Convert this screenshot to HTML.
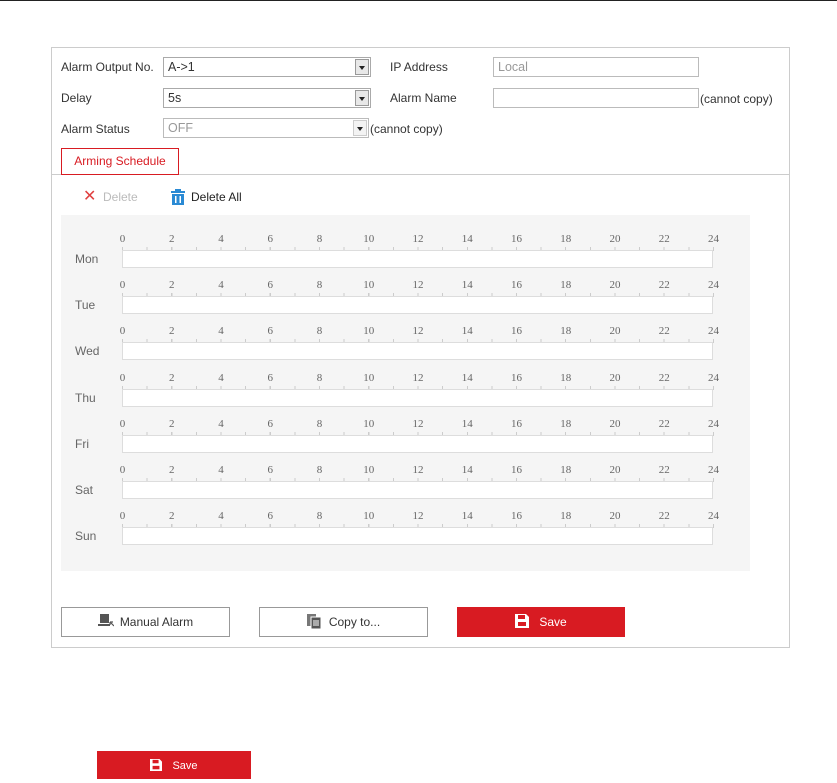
<!DOCTYPE html>
<html><head><style>
body{margin:0;width:837px;height:783px;background:#fff;font-family:"Liberation Sans",sans-serif;font-size:12px;color:#333;position:relative;overflow:hidden}
.a{position:absolute}
.lbl{position:absolute;font-size:12px;color:#333}
.sel{position:absolute;border:1px solid #aaa;background:#fff;height:18px;box-sizing:border-box;height:20px}
.sel span{position:absolute;left:4px;top:2px;font-size:12.5px}
.arr{position:absolute;right:1px;top:1px;width:14px;height:16px;background:#e8e8e8;border:1px solid #999;box-sizing:border-box}
.arr:after{content:"";position:absolute;left:3px;top:6px;border-left:3.5px solid transparent;border-right:3.5px solid transparent;border-top:4px solid #222}
.num{position:absolute;font-family:"Liberation Serif",serif;font-size:11px;color:#666;transform:translateX(-50%)}
.ticks{position:absolute;left:122px;width:592px;height:4px;background:repeating-linear-gradient(to right,#ccc 0 1px,transparent 1px 24.625px)}
.bar{position:absolute;left:122px;width:591px;height:18px;background:#fff;border:1px solid #ddd;box-sizing:border-box}
.day{position:absolute;left:75px;color:#666;font-size:12px}
.btn{position:absolute;top:607px;height:30px;box-sizing:border-box;border:1px solid #999;background:#fff;text-align:center;line-height:28px;font-size:12px;color:#333}
.red{background:#d81b22;border-color:#d81b22;color:#fff}
</style></head><body>
<div class="a" style="left:0;top:0;width:837px;height:1px;background:#222"></div>
<div class="a" style="left:51px;top:47px;width:739px;height:601px;border:1px solid #ccc;box-sizing:border-box"></div>

<div class="lbl" style="left:61px;top:60px">Alarm Output No.</div>
<div class="sel" style="left:163px;top:57px;width:208px"><span>A-&gt;1</span><div class="arr"></div></div>
<div class="lbl" style="left:390px;top:60px">IP Address</div>
<div class="sel" style="left:493px;top:57px;width:206px;border-color:#bbb"><span style="color:#999">Local</span></div>

<div class="lbl" style="left:61px;top:91px">Delay</div>
<div class="sel" style="left:163px;top:88px;width:208px"><span>5s</span><div class="arr"></div></div>
<div class="lbl" style="left:390px;top:91px">Alarm Name</div>
<div class="sel" style="left:493px;top:88px;width:206px;border-color:#bbb"></div>
<div class="lbl" style="left:700px;top:92px">(cannot copy)</div>

<div class="lbl" style="left:61px;top:122px">Alarm Status</div>
<div class="sel" style="left:163px;top:118px;width:206px;border-color:#bbb"><span style="color:#999">OFF</span><div class="arr" style="background:#f3f3f3;border-color:#ccc"></div></div>
<div class="lbl" style="left:370px;top:122px">(cannot copy)</div>

<div class="a" style="left:51px;top:174px;width:739px;height:1px;background:#ccc"></div>
<div class="a" style="left:61px;top:148px;width:118px;height:27px;border:1px solid #d81b22;box-sizing:border-box;background:#fff;color:#d81b22;font-size:12px;text-align:center;line-height:25px">Arming Schedule</div>

<div class="a" style="left:83px;top:189px;color:#e04040;font-size:16px;line-height:16px">✕</div>
<div class="lbl" style="left:103px;top:190px;color:#bbb">Delete</div>
<svg class="a" style="left:170px;top:189px" width="16" height="16" viewBox="0 0 16 16"><rect x="1" y="2" width="14" height="2" fill="#2a8ad4"/><rect x="5" y="0" width="6" height="2" fill="#2a8ad4"/><rect x="2" y="5" width="12" height="11" fill="#2a8ad4"/><rect x="5" y="7" width="1.5" height="7" fill="#fff"/><rect x="9.5" y="7" width="1.5" height="7" fill="#fff"/></svg>
<div class="lbl" style="left:191px;top:190px;color:#222">Delete All</div>

<div class="a" style="left:61px;top:215px;width:689px;height:356px;background:#f5f5f5"></div>

<div id="rows"></div>

<div class="btn" style="left:61px;width:169px"><svg width="16" height="14" viewBox="0 0 16 14" style="vertical-align:-2px;margin-right:6px"><rect x="2" y="0" width="9" height="9" fill="#555"/><rect x="0" y="10" width="12" height="2" fill="#555"/><path d="M12 8L16 12M12 8V11M12 8H15" stroke="#555" stroke-width="1.2" fill="none"/></svg>Manual Alarm</div>
<div class="btn" style="left:259px;width:169px"><svg width="15" height="15" viewBox="0 0 15 15" style="vertical-align:-3px;margin-right:7px"><rect x="0" y="0" width="9" height="12" fill="#777"/><rect x="4" y="3" width="10" height="12" fill="#555" stroke="#fff" stroke-width="1"/><path d="M6 7H12M6 9H12M6 11H12" stroke="#fff" stroke-width="1"/></svg>Copy to...</div>
<div class="btn red" style="left:457px;width:168px"><svg width="14" height="14" viewBox="0 0 14 14" style="vertical-align:-2px;margin-right:10px"><path d="M0 0H11L14 3V14H0Z" fill="#fff"/><rect x="3" y="1" width="7" height="4" fill="#d81b22"/><rect x="3" y="8" width="8" height="4" fill="#d81b22"/></svg>Save</div>
<div class="btn red" style="left:97px;top:751px;width:154px;height:28px;line-height:28px;font-size:11px"><svg width="12" height="12" viewBox="0 0 14 14" style="vertical-align:-2px;margin-right:10px"><path d="M0 0H11L14 3V14H0Z" fill="#fff"/><rect x="3" y="1" width="7" height="4" fill="#d81b22"/><rect x="3" y="8" width="8" height="4" fill="#d81b22"/></svg>Save</div>

<script>
var days=["Mon","Tue","Wed","Thu","Fri","Sat","Sun"],h="";
for(var d=0;d<7;d++){var y=233+d*46.2;
for(var i=0;i<=24;i+=2)h+='<div class="num" style="left:'+(122.5+i*24.625)+'px;top:'+y+'px">'+i+'</div>';
h+='<div class="ticks" style="top:'+(y+14)+'px"></div><div class="bar" style="top:'+(y+17)+'px"></div><div class="day" style="top:'+(y+19)+'px">'+days[d]+'</div>';}
document.getElementById("rows").innerHTML=h;
</script>
</body></html>
